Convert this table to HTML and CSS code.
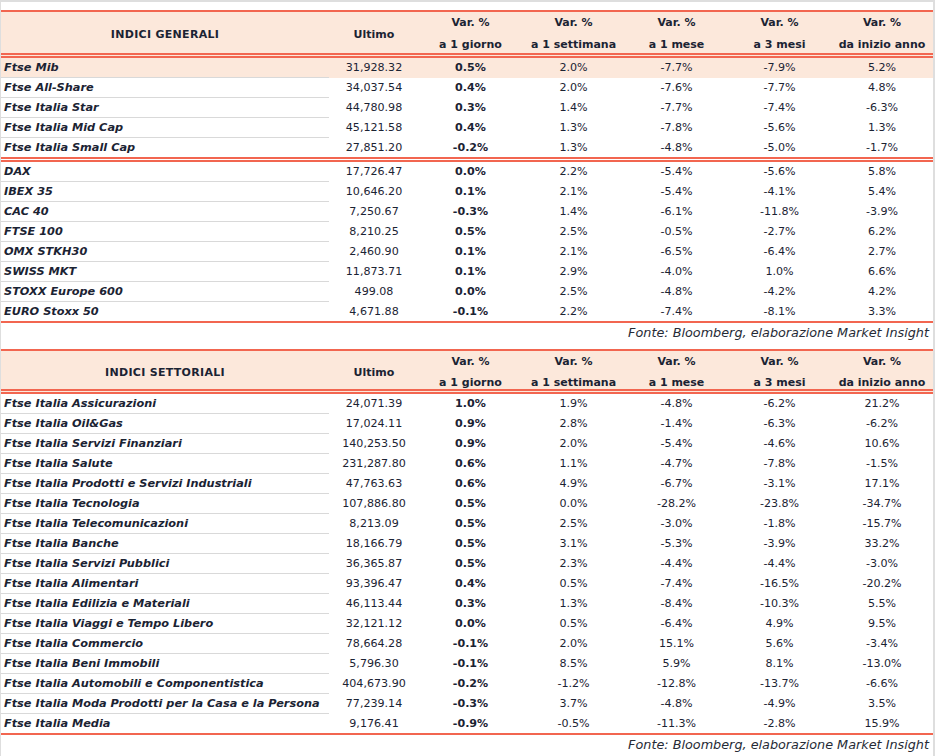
FILE: index.html
```html
<!DOCTYPE html>
<html lang="it">
<head>
<meta charset="utf-8">
<title>Indici</title>
<link rel="stylesheet" href="styles.css">
</head>
<body>
<div class="frame">
  <section class="block">
    <div class="grid head head-tall">
      <div class="h-title">INDICI GENERALI</div>
      <div class="h-single">Ultimo</div>
      <div class="h-double"><span>Var. %</span><span>a 1 giorno</span></div>
      <div class="h-double"><span>Var. %</span><span>a 1 settimana</span></div>
      <div class="h-double"><span>Var. %</span><span>a 1 mese</span></div>
      <div class="h-double"><span>Var. %</span><span>a 3 mesi</span></div>
      <div class="h-double"><span>Var. %</span><span>da inizio anno</span></div>
    </div>
    <div class="grid row hl"><div class="name">Ftse Mib</div><div>31,928.32</div><div class="b">0.5%</div><div>2.0%</div><div>-7.7%</div><div>-7.9%</div><div>5.2%</div></div>
    <div class="grid row"><div class="name">Ftse All-Share</div><div>34,037.54</div><div class="b">0.4%</div><div>2.0%</div><div>-7.6%</div><div>-7.7%</div><div>4.8%</div></div>
    <div class="grid row"><div class="name">Ftse Italia Star</div><div>44,780.98</div><div class="b">0.3%</div><div>1.4%</div><div>-7.7%</div><div>-7.4%</div><div>-6.3%</div></div>
    <div class="grid row"><div class="name">Ftse Italia Mid Cap</div><div>45,121.58</div><div class="b">0.4%</div><div>1.3%</div><div>-7.8%</div><div>-5.6%</div><div>1.3%</div></div>
    <div class="grid row sep"><div class="name">Ftse Italia Small Cap</div><div>27,851.20</div><div class="b">-0.2%</div><div>1.3%</div><div>-4.8%</div><div>-5.0%</div><div>-1.7%</div></div>
    <div class="grid row"><div class="name">DAX</div><div>17,726.47</div><div class="b">0.0%</div><div>2.2%</div><div>-5.4%</div><div>-5.6%</div><div>5.8%</div></div>
    <div class="grid row"><div class="name">IBEX 35</div><div>10,646.20</div><div class="b">0.1%</div><div>2.1%</div><div>-5.4%</div><div>-4.1%</div><div>5.4%</div></div>
    <div class="grid row"><div class="name">CAC 40</div><div>7,250.67</div><div class="b">-0.3%</div><div>1.4%</div><div>-6.1%</div><div>-11.8%</div><div>-3.9%</div></div>
    <div class="grid row"><div class="name">FTSE 100</div><div>8,210.25</div><div class="b">0.5%</div><div>2.5%</div><div>-0.5%</div><div>-2.7%</div><div>6.2%</div></div>
    <div class="grid row"><div class="name">OMX STKH30</div><div>2,460.90</div><div class="b">0.1%</div><div>2.1%</div><div>-6.5%</div><div>-6.4%</div><div>2.7%</div></div>
    <div class="grid row"><div class="name">SWISS MKT</div><div>11,873.71</div><div class="b">0.1%</div><div>2.9%</div><div>-4.0%</div><div>1.0%</div><div>6.6%</div></div>
    <div class="grid row"><div class="name">STOXX Europe 600</div><div>499.08</div><div class="b">0.0%</div><div>2.5%</div><div>-4.8%</div><div>-4.2%</div><div>4.2%</div></div>
    <div class="grid row end"><div class="name">EURO Stoxx 50</div><div>4,671.88</div><div class="b">-0.1%</div><div>2.2%</div><div>-7.4%</div><div>-8.1%</div><div>3.3%</div></div>
    <p class="source">Fonte: Bloomberg, elaborazione Market Insight</p>
  </section>

  <section class="block">
    <div class="grid head">
      <div class="h-title">INDICI SETTORIALI</div>
      <div class="h-single">Ultimo</div>
      <div class="h-double"><span>Var. %</span><span>a 1 giorno</span></div>
      <div class="h-double"><span>Var. %</span><span>a 1 settimana</span></div>
      <div class="h-double"><span>Var. %</span><span>a 1 mese</span></div>
      <div class="h-double"><span>Var. %</span><span>a 3 mesi</span></div>
      <div class="h-double"><span>Var. %</span><span>da inizio anno</span></div>
    </div>
    <div class="grid row"><div class="name">Ftse Italia Assicurazioni</div><div>24,071.39</div><div class="b">1.0%</div><div>1.9%</div><div>-4.8%</div><div>-6.2%</div><div>21.2%</div></div>
    <div class="grid row"><div class="name">Ftse Italia Oil&amp;Gas</div><div>17,024.11</div><div class="b">0.9%</div><div>2.8%</div><div>-1.4%</div><div>-6.3%</div><div>-6.2%</div></div>
    <div class="grid row"><div class="name">Ftse Italia Servizi Finanziari</div><div>140,253.50</div><div class="b">0.9%</div><div>2.0%</div><div>-5.4%</div><div>-4.6%</div><div>10.6%</div></div>
    <div class="grid row"><div class="name">Ftse Italia Salute</div><div>231,287.80</div><div class="b">0.6%</div><div>1.1%</div><div>-4.7%</div><div>-7.8%</div><div>-1.5%</div></div>
    <div class="grid row"><div class="name">Ftse Italia Prodotti e Servizi Industriali</div><div>47,763.63</div><div class="b">0.6%</div><div>4.9%</div><div>-6.7%</div><div>-3.1%</div><div>17.1%</div></div>
    <div class="grid row"><div class="name">Ftse Italia Tecnologia</div><div>107,886.80</div><div class="b">0.5%</div><div>0.0%</div><div>-28.2%</div><div>-23.8%</div><div>-34.7%</div></div>
    <div class="grid row"><div class="name">Ftse Italia Telecomunicazioni</div><div>8,213.09</div><div class="b">0.5%</div><div>2.5%</div><div>-3.0%</div><div>-1.8%</div><div>-15.7%</div></div>
    <div class="grid row"><div class="name">Ftse Italia Banche</div><div>18,166.79</div><div class="b">0.5%</div><div>3.1%</div><div>-5.3%</div><div>-3.9%</div><div>33.2%</div></div>
    <div class="grid row"><div class="name">Ftse Italia Servizi Pubblici</div><div>36,365.87</div><div class="b">0.5%</div><div>2.3%</div><div>-4.4%</div><div>-4.4%</div><div>-3.0%</div></div>
    <div class="grid row"><div class="name">Ftse Italia Alimentari</div><div>93,396.47</div><div class="b">0.4%</div><div>0.5%</div><div>-7.4%</div><div>-16.5%</div><div>-20.2%</div></div>
    <div class="grid row"><div class="name">Ftse Italia Edilizia e Materiali</div><div>46,113.44</div><div class="b">0.3%</div><div>1.3%</div><div>-8.4%</div><div>-10.3%</div><div>5.5%</div></div>
    <div class="grid row"><div class="name">Ftse Italia Viaggi e Tempo Libero</div><div>32,121.12</div><div class="b">0.0%</div><div>0.5%</div><div>-6.4%</div><div>4.9%</div><div>9.5%</div></div>
    <div class="grid row"><div class="name">Ftse Italia Commercio</div><div>78,664.28</div><div class="b">-0.1%</div><div>2.0%</div><div>15.1%</div><div>5.6%</div><div>-3.4%</div></div>
    <div class="grid row"><div class="name">Ftse Italia Beni Immobili</div><div>5,796.30</div><div class="b">-0.1%</div><div>8.5%</div><div>5.9%</div><div>8.1%</div><div>-13.0%</div></div>
    <div class="grid row"><div class="name">Ftse Italia Automobili e Componentistica</div><div>404,673.90</div><div class="b">-0.2%</div><div>-1.2%</div><div>-12.8%</div><div>-13.7%</div><div>-6.6%</div></div>
    <div class="grid row"><div class="name">Ftse Italia Moda Prodotti per la Casa e la Persona</div><div>77,239.14</div><div class="b">-0.3%</div><div>3.7%</div><div>-4.8%</div><div>-4.9%</div><div>3.5%</div></div>
    <div class="grid row end"><div class="name">Ftse Italia Media</div><div>9,176.41</div><div class="b">-0.9%</div><div>-0.5%</div><div>-11.3%</div><div>-2.8%</div><div>15.9%</div></div>
    <p class="source">Fonte: Bloomberg, elaborazione Market Insight</p>
  </section>
</div>
</body>
</html>
```

FILE: styles.css
```css
html, body {
  margin: 0;
  padding: 0;
  background: #ffffff;
}

body {
  font-family: "DejaVu Sans", "Liberation Sans", sans-serif;
  color: #1b2333;
}

.frame {
  box-sizing: border-box;
  width: 935px;
  min-height: 756px;
  border-left: 1px solid #dedede;
  border-top: 2px solid #dedede;
  border-right: 2px solid #dedede;
  padding-top: 8px;
}

.block {
  border-top: 2px solid #f26650;
}

.grid {
  display: grid;
  grid-template-columns: 328px 90px 103px 103px 103px 103px 102px;
}

.head {
  background: #fce8db;
  height: 38px;
  border-bottom: 5px double #f26650;
  font-weight: bold;
  font-size: 11px;
}

.head-tall {
  height: 41px;
}

.h-title,
.h-single {
  display: flex;
  align-items: center;
  justify-content: center;
}

.h-title {
  font-size: 11px;
  letter-spacing: 0.3px;
}

.h-double {
  display: flex;
  flex-direction: column;
  align-items: center;
  justify-content: center;
  line-height: 21px;
}

.head-tall .h-double {
  line-height: 22px;
}

.row {
  height: 20px;
  font-size: 11.1px;
  line-height: 19px;
  text-align: center;
}

.row > div {
  box-sizing: border-box;
  height: 20px;
  white-space: nowrap;
}

.row .name {
  text-align: left;
  padding-left: 3px;
  font-weight: bold;
  font-style: italic;
  font-size: 11.3px;
  border-bottom: 1px solid #d9d9d9;
}

.row .b {
  font-weight: bold;
}

.row.hl {
  background: #fce8db;
}

.row.sep,
.row.end {
  height: auto;
}

.row.sep > div,
.row.end > div {
  height: 19px;
  border-bottom: none;
}

.row.sep {
  border-bottom: 5px double #f26650;
}

.row.end {
  border-bottom: 2px solid #f26650;
}

.source {
  margin: 0;
  height: 26px;
  padding-right: 4px;
  text-align: right;
  font-style: italic;
  font-size: 12.8px;
  line-height: 19px;
  color: #262b36;
}
```
